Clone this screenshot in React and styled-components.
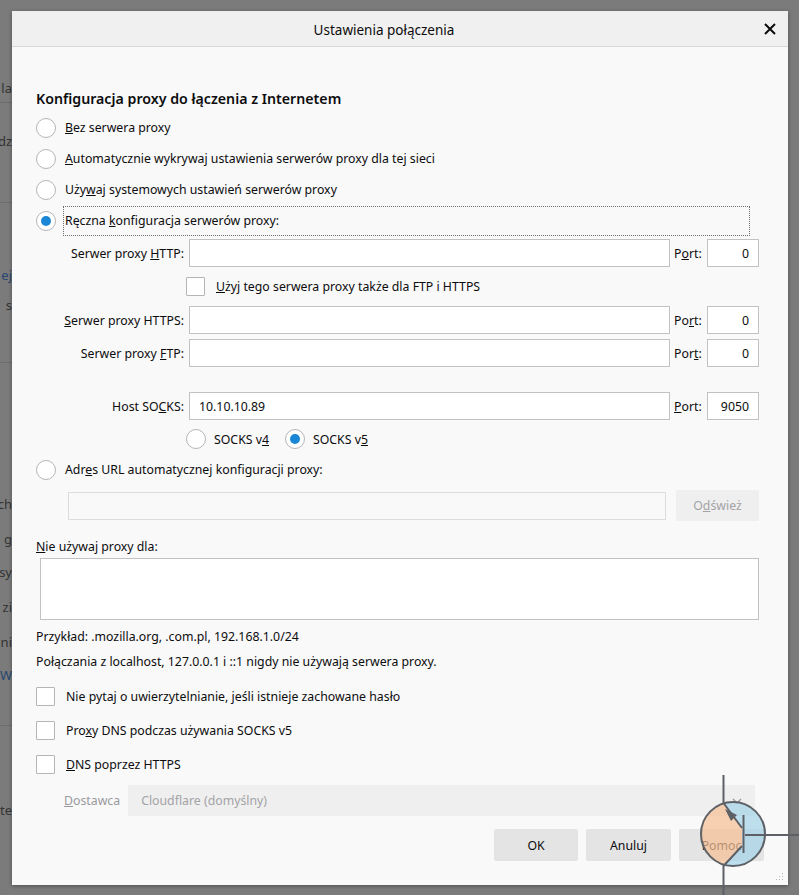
import styled, { createGlobalStyle } from 'styled-components';

const GlobalStyle = createGlobalStyle`
  html, body {
    margin: 0;
    padding: 0;
  }
  body {
    background: #7b7b7b;
    font-family: 'Noto Sans', 'Open Sans', sans-serif;
    font-size: 12.3px;
    color: #0c0c0d;
  }
`;

const Page = styled.div`
  position: relative;
  display: flex;
  width: 799px;
  height: 895px;
  overflow: hidden;
`;

const Behind = styled.div`
  flex: 0 0 12px;
  display: flex;
  flex-direction: column;
  overflow: hidden;
`;

const Peek = styled.div`
  height: 20px;
  margin-top: ${p => p.$mt}px;
  display: flex;
  align-items: center;
  justify-content: flex-end;
  white-space: nowrap;
  font-size: 13px;
  color: ${p => (p.$blue ? '#27466f' : '#343434')};
`;

const Rule = styled.div`
  height: 1px;
  margin-top: ${p => p.$mt}px;
  background: #6c6c6c;
`;

const Dialog = styled.div`
  position: relative;
  flex: 0 0 775px;
  margin: 11px 0 10px;
  display: flex;
  flex-direction: column;
  background: #f9f9fa;
  box-shadow: 0 1px 4px rgba(0, 0, 0, 0.35);
`;

const Header = styled.div`
  flex: 0 0 35px;
  display: flex;
  align-items: center;
  background: #f0f0f0;
  border-bottom: 1px solid #d7d7db;
`;

const Title = styled.div`
  flex: 1;
  text-align: center;
  font-size: 13.5px;
  padding-top: 2px;
`;

const Close = styled.div`
  width: 27px;
  margin-right: 5px;
  display: flex;
  justify-content: center;
`;

const Body = styled.div`
  display: flex;
  flex-direction: column;
  padding: 0 29px 24px 24px;
`;

const Heading = styled.div`
  height: 22px;
  margin-top: 40px;
  display: flex;
  align-items: center;
  font-size: 14.2px;
  font-weight: 600;
`;

const Row = styled.div`
  display: flex;
  align-items: center;
  height: ${p => p.$h || 31}px;
  margin-top: ${p => p.$mt || 0}px;
  margin-left: ${p => p.$ml || 0}px;
  gap: ${p => (p.$gap != null ? p.$gap : 9)}px;
`;

const RadioCircle = styled.span`
  flex: 0 0 20px;
  width: 20px;
  height: 20px;
  box-sizing: border-box;
  border-radius: 50%;
  border: 1px solid #b5b5b7;
  background: #fff;
  display: flex;
  align-items: center;
  justify-content: center;
  &::after {
    content: '';
    width: 10px;
    height: 10px;
    border-radius: 50%;
    background: ${p => (p.$on ? '#1a86d6' : 'transparent')};
  }
`;

const Box = styled.span`
  flex: 0 0 19px;
  width: 19px;
  height: 19px;
  box-sizing: border-box;
  border: 1px solid #b5b5b7;
  border-radius: 1px;
  background: #fff;
`;

const Focused = styled.span`
  flex: 1;
  height: 28px;
  margin: 0 9px 0 -2px;
  padding-left: 1px;
  display: flex;
  align-items: center;
  border: 1px dotted #6d6d6d;
`;

const FieldRow = styled.div`
  display: grid;
  grid-template-columns: 148px 481px 27px 52px;
  column-gap: 5px;
  align-items: center;
  height: 28px;
  margin-top: ${p => p.$mt || 0}px;
`;

const FieldLabel = styled.span`
  text-align: right;
  white-space: nowrap;
`;

const PortLabel = styled.span`
  margin-left: -1px;
`;

const Input = styled.div`
  height: 28px;
  box-sizing: border-box;
  border: 1px solid #c2c2c4;
  background: ${p => (p.$disabled ? '#f9f9fa' : '#fff')};
  border-color: ${p => (p.$disabled ? '#dcdcde' : '#c2c2c4')};
  display: flex;
  align-items: center;
  justify-content: ${p => (p.$right ? 'flex-end' : 'flex-start')};
  padding: 0 9px;
  flex: ${p => (p.$grow ? 1 : 'none')};
  margin-left: ${p => p.$ml || 0}px;
`;

const GridCell = styled.div`
  grid-column: 2 / 5;
  display: flex;
  align-items: center;
  gap: ${p => p.$gap || 10}px;
  margin-left: -3px;
`;

const CheckRow = styled.div`
  display: grid;
  grid-template-columns: 148px 1fr;
  column-gap: 5px;
  height: ${p => p.$h}px;
  margin-top: ${p => p.$mt || 0}px;
  align-items: center;
`;

const Pair = styled.span`
  display: flex;
  align-items: center;
  gap: 8px;
`;

const Button = styled.div`
  height: ${p => p.$h || 32}px;
  width: ${p => p.$w}px;
  box-sizing: border-box;
  display: flex;
  align-items: center;
  justify-content: center;
  background: ${p => (p.$disabled ? '#efeff0' : '#e4e4e5')};
  color: ${p => (p.$disabled ? '#a3a3a5' : '#0c0c0d')};
  border-radius: 2px;
`;

const Text = styled.div`
  height: 20px;
  display: flex;
  align-items: center;
  margin-top: ${p => p.$mt || 0}px;
`;

const TextArea = styled.div`
  height: 62px;
  box-sizing: border-box;
  margin: 2px 0 0 4px;
  border: 1px solid #c2c2c4;
  background: #fff;
`;

const Muted = styled.span`
  color: #9a9a9c;
`;

const Select = styled.div`
  flex: 1;
  height: 31px;
  margin-right: 4px;
  padding: 0 13px;
  display: flex;
  align-items: center;
  justify-content: space-between;
  background: #efeff0;
  color: #a3a3a5;
`;

const Buttons = styled.div`
  display: flex;
  justify-content: flex-end;
  gap: 8px;
  margin: 13px -5px 0 0;
`;

const Grip = styled.svg`
  position: absolute;
  right: 4px;
  bottom: 4px;
`;

const Marker = styled.svg`
  position: absolute;
  left: 690px;
  top: 770px;
`;

const peeks = [
  { t: 'la', mt: 78 },
  { rule: true, mt: 4 },
  { t: 'dz', mt: 28 },
  { rule: true, mt: 51 },
  { t: 'ej', mt: 62, blue: true },
  { t: 's', mt: 10 },
  { rule: true, mt: 47 },
  { t: 'ch', mt: 131 },
  { t: 'g', mt: 15 },
  { t: 'sy', mt: 13 },
  { t: 'zi', mt: 15 },
  { t: 'ni', mt: 15 },
  { t: 'W', mt: 13, blue: true },
  { rule: true, mt: 40 },
  { t: 'ete', mt: 74 },
];

const Radio = ({ on, children }) => (
  <Row>
    <RadioCircle $on={on} />
    <span>{children}</span>
  </Row>
);

const Check = ({ children, mt }) => (
  <Row $h={34} $mt={mt} $gap={11}>
    <Box />
    <span>{children}</span>
  </Row>
);

export default function App() {
  return (
    <Page>
      <GlobalStyle />
      <Behind>
        {peeks.map((p, i) =>
          p.rule ? (
            <Rule key={i} $mt={p.mt} />
          ) : (
            <Peek key={i} $mt={p.mt} $blue={p.blue}>
              {p.t}
            </Peek>
          )
        )}
      </Behind>

      <Dialog>
        <Header>
          <Title>Ustawienia połączenia</Title>
          <Close>
            <svg width="12" height="12" viewBox="0 0 12 12">
              <path d="M1 1L11 11M11 1L1 11" stroke="#0c0c0d" strokeWidth="2" />
            </svg>
          </Close>
        </Header>

        <Body>
          <Heading>Konfiguracja proxy do łączenia z Internetem</Heading>
          <Row $mt={3}>
            <RadioCircle />
            <span><u>B</u>ez serwera proxy</span>
          </Row>
          <Radio><u>A</u>utomatycznie wykrywaj ustawienia serwerów proxy dla tej sieci</Radio>
          <Radio>Uży<u>w</u>aj systemowych ustawień serwerów proxy</Radio>
          <Row>
            <RadioCircle $on />
            <Focused>
              <span>Ręczna <u>k</u>onfiguracja serwerów proxy:</span>
            </Focused>
          </Row>

          <FieldRow $mt={3}>
            <FieldLabel>Serwer proxy <u>H</u>TTP:</FieldLabel>
            <Input />
            <PortLabel>P<u>o</u>rt:</PortLabel>
            <Input $right>0</Input>
          </FieldRow>
          <CheckRow $h={39}>
            <span />
            <GridCell $gap={11}>
              <Box />
              <span><u>U</u>żyj tego serwera proxy także dla FTP i HTTPS</span>
            </GridCell>
          </CheckRow>
          <FieldRow>
            <FieldLabel><u>S</u>erwer proxy HTTPS:</FieldLabel>
            <Input />
            <PortLabel>Po<u>r</u>t:</PortLabel>
            <Input $right>0</Input>
          </FieldRow>
          <FieldRow $mt={5}>
            <FieldLabel>Serwer proxy <u>F</u>TP:</FieldLabel>
            <Input />
            <PortLabel>Por<u>t</u>:</PortLabel>
            <Input $right>0</Input>
          </FieldRow>
          <FieldRow $mt={25}>
            <FieldLabel>Host SO<u>C</u>KS:</FieldLabel>
            <Input>10.10.10.89</Input>
            <PortLabel><u>P</u>ort:</PortLabel>
            <Input $right>9050</Input>
          </FieldRow>
          <CheckRow $h={30} $mt={4}>
            <span />
            <GridCell $gap={16}>
              <Pair>
                <RadioCircle />
                <span>SOCKS v<u>4</u></span>
              </Pair>
              <Pair>
                <RadioCircle $on />
                <span>SOCKS v<u>5</u></span>
              </Pair>
            </GridCell>
          </CheckRow>

          <Radio>Adr<u>e</u>s URL automatycznej konfiguracji proxy:</Radio>
          <Row $mt={5} $gap={10}>
            <Input $grow $disabled $ml={32} />
            <Button $w={83} $h={31} $disabled>
              <span>O<u>d</u>śwież</span>
            </Button>
          </Row>

          <Text $mt={15}><span><u>N</u>ie używaj proxy dla:</span></Text>
          <TextArea />
          <Text $mt={6}>Przykład: .mozilla.org, .com.pl, 192.168.1.0/24</Text>
          <Text $mt={5}>Połączania z localhost, 127.0.0.1 i ::1 nigdy nie używają serwera proxy.</Text>

          <Check mt={8}>Nie pyta<u>j</u> o uwierzytelnianie, jeśli istnieje zachowane hasło</Check>
          <Check>Pro<u>x</u>y DNS podczas używania SOCKS v5</Check>
          <Check><u>D</u>NS poprzez HTTPS</Check>

          <Row $mt={4} $ml={28} $gap={8}>
            <Muted><u>D</u>ostawca</Muted>
            <Select>
              <span>Cloudflare (domyślny)</span>
              <svg width="10" height="6" viewBox="0 0 10 6">
                <path d="M1 1L5 5L9 1" fill="none" stroke="#9a9a9c" strokeWidth="1.3" />
              </svg>
            </Select>
          </Row>

          <Buttons>
            <Button $w={84}>OK</Button>
            <Button $w={85}>Anuluj</Button>
            <Button $w={85}>Pomoc</Button>
          </Buttons>
        </Body>

        <Grip width="8" height="8" viewBox="0 0 8 8">
          <rect x="6" y="0" width="1" height="1" fill="#b5b5b7" />
          <rect x="3" y="3" width="1" height="1" fill="#b5b5b7" />
          <rect x="6" y="3" width="1" height="1" fill="#b5b5b7" />
          <rect x="0" y="6" width="1" height="1" fill="#b5b5b7" />
          <rect x="3" y="6" width="1" height="1" fill="#b5b5b7" />
          <rect x="6" y="6" width="1" height="1" fill="#b5b5b7" />
        </Grip>
      </Dialog>

      <Marker width="109" height="125" viewBox="690 770 109 125">
        <clipPath id="disc">
          <circle cx="733" cy="834" r="32" />
        </clipPath>
        <g clipPath="url(#disc)" opacity="0.72">
          <rect x="690" y="790" width="109" height="90" fill="#a6d3e8" />
          <path d="M690 790 L723 790 L723 803 L742 828 L742 846 L723 866 L723 880 L690 880 Z" fill="#f5bf96" />
        </g>
        <g stroke="#5d6166" strokeWidth="2" fill="none">
          <circle cx="733" cy="834" r="32" />
          <path d="M723.5 775 V803 L742 828" />
          <path d="M742 846 L723.5 866 V895" />
          <path d="M743.5 815 V853" />
          <path d="M745 835 H799" />
        </g>
        <path d="M725 809 L737 815 L731 821 Z" fill="#5d6166" />
      </Marker>
    </Page>
  );
}
